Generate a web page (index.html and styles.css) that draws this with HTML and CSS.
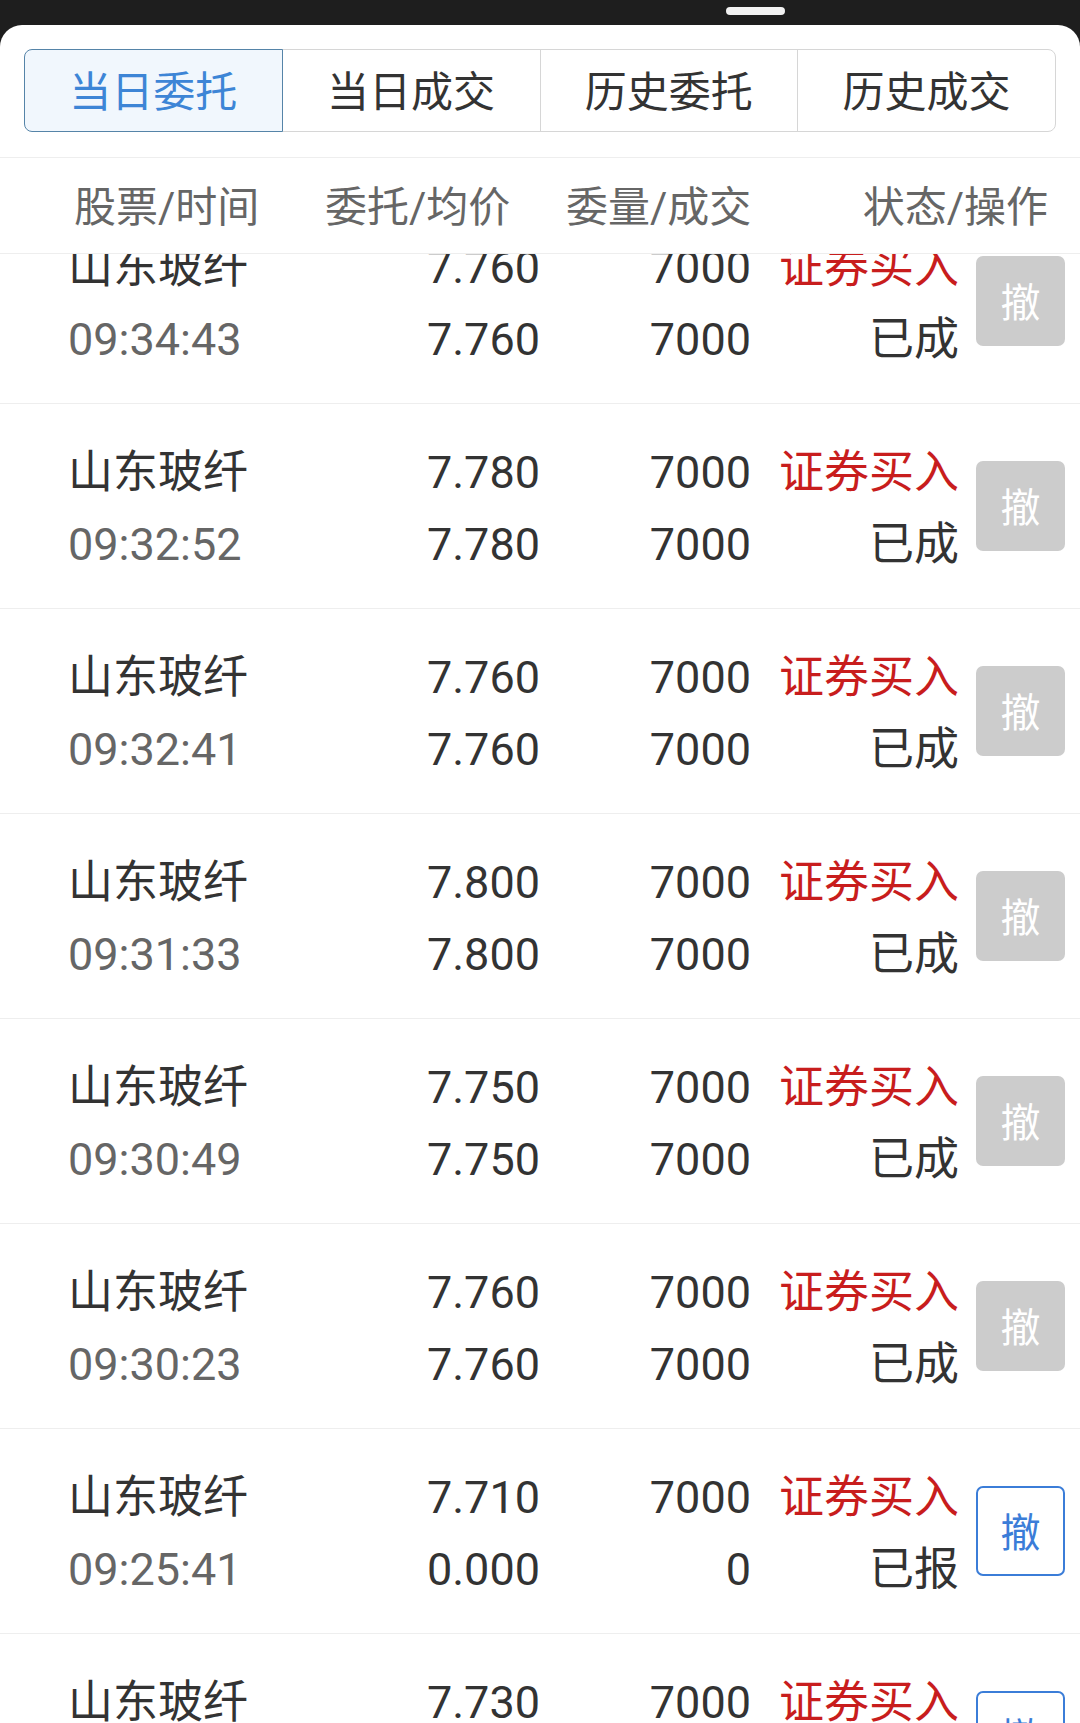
FILE: index.html
```html
<!DOCTYPE html>
<html lang="zh-CN">
<head>
    <meta charset="UTF-8">
    <meta name="viewport" content="width=device-width, initial-scale=1.0">
    <title>当日委托</title>
    <link rel="stylesheet" href="styles.css">
</head>
<body>
    <div class="top-bar">
        <div class="handle"></div>
    </div>

    <div class="sheet">
        <div class="tabs">
            <div class="tab active">当日委托</div>
            <div class="tab">当日成交</div>
            <div class="tab">历史委托</div>
            <div class="tab">历史成交</div>
        </div>

        <div class="list-header">
            <span>股票/时间</span>
            <span>委托/均价</span>
            <span>委量/成交</span>
            <span>状态/操作</span>
        </div>

        <div class="list-view">
            <div class="list">
                <div class="row">
                    <div class="cell name"><div>山东玻纤</div><div class="time">09:34:43</div></div>
                    <div class="cell num"><div>7.760</div><div>7.760</div></div>
                    <div class="cell num"><div>7000</div><div>7000</div></div>
                    <div class="cell num"><div class="buy">证券买入</div><div>已成</div></div>
                    <button class="cancel-btn">撤</button>
                </div>
                <div class="row">
                    <div class="cell name"><div>山东玻纤</div><div class="time">09:32:52</div></div>
                    <div class="cell num"><div>7.780</div><div>7.780</div></div>
                    <div class="cell num"><div>7000</div><div>7000</div></div>
                    <div class="cell num"><div class="buy">证券买入</div><div>已成</div></div>
                    <button class="cancel-btn">撤</button>
                </div>
                <div class="row">
                    <div class="cell name"><div>山东玻纤</div><div class="time">09:32:41</div></div>
                    <div class="cell num"><div>7.760</div><div>7.760</div></div>
                    <div class="cell num"><div>7000</div><div>7000</div></div>
                    <div class="cell num"><div class="buy">证券买入</div><div>已成</div></div>
                    <button class="cancel-btn">撤</button>
                </div>
                <div class="row">
                    <div class="cell name"><div>山东玻纤</div><div class="time">09:31:33</div></div>
                    <div class="cell num"><div>7.800</div><div>7.800</div></div>
                    <div class="cell num"><div>7000</div><div>7000</div></div>
                    <div class="cell num"><div class="buy">证券买入</div><div>已成</div></div>
                    <button class="cancel-btn">撤</button>
                </div>
                <div class="row">
                    <div class="cell name"><div>山东玻纤</div><div class="time">09:30:49</div></div>
                    <div class="cell num"><div>7.750</div><div>7.750</div></div>
                    <div class="cell num"><div>7000</div><div>7000</div></div>
                    <div class="cell num"><div class="buy">证券买入</div><div>已成</div></div>
                    <button class="cancel-btn">撤</button>
                </div>
                <div class="row">
                    <div class="cell name"><div>山东玻纤</div><div class="time">09:30:23</div></div>
                    <div class="cell num"><div>7.760</div><div>7.760</div></div>
                    <div class="cell num"><div>7000</div><div>7000</div></div>
                    <div class="cell num"><div class="buy">证券买入</div><div>已成</div></div>
                    <button class="cancel-btn">撤</button>
                </div>
                <div class="row">
                    <div class="cell name"><div>山东玻纤</div><div class="time">09:25:41</div></div>
                    <div class="cell num"><div>7.710</div><div>0.000</div></div>
                    <div class="cell num"><div>7000</div><div>0</div></div>
                    <div class="cell num"><div class="buy">证券买入</div><div>已报</div></div>
                    <button class="cancel-btn open">撤</button>
                </div>
                <div class="row">
                    <div class="cell name"><div>山东玻纤</div><div class="time">09:25:12</div></div>
                    <div class="cell num"><div>7.730</div><div>0.000</div></div>
                    <div class="cell num"><div>7000</div><div>0</div></div>
                    <div class="cell num"><div class="buy">证券买入</div><div>已报</div></div>
                    <button class="cancel-btn open">撤</button>
                </div>
            </div>
        </div>
    </div>
</body>
</html>
```

FILE: styles.css
```css
* {
    box-sizing: border-box;
}

body {
    margin: 0;
    background-color: #1e1e1e;
    font-family: Roboto, "Noto Sans CJK SC", sans-serif;
    color: #333;
}

.top-bar {
    height: 25px;
    padding-top: 7px;
    padding-left: 726px;
}

.handle {
    width: 59px;
    height: 8px;
    border-radius: 4px;
    background: #f2f2f2;
}

.sheet {
    height: calc(100vh - 25px);
    background: #fff;
    border-radius: 22px 22px 0 0;
    padding-top: 24px;
    display: flex;
    flex-direction: column;
}

.tabs {
    display: flex;
    height: 83px;
    margin: 0 24px;
}

.tab {
    flex: 1;
    display: flex;
    align-items: center;
    justify-content: center;
    padding-bottom: 4px;
    font-size: 42px;
    color: #333;
    border: 1px solid #d6d6d6;
    margin-left: -1px;
}

.tab:first-child {
    margin-left: 0;
    border-radius: 8px 0 0 8px;
}

.tab:last-child {
    border-radius: 0 8px 8px 0;
}

.tab.active {
    position: relative;
    color: #3d85d6;
    background: #f1f7fd;
    border-color: #5584a8;
}

.list-header {
    display: grid;
    grid-template-columns: 251px 241px 1fr auto;
    align-items: center;
    height: 97px;
    margin-top: 25px;
    padding: 0 32px 5px 74px;
    border-top: 1px solid #eee;
    border-bottom: 1px solid #eee;
    font-size: 42px;
    color: #666;
}

.list-view {
    flex: 1;
    min-height: 0;
    overflow: hidden;
}

/* scrolled a little: the first row sits partly under the header */
.list {
    margin-top: -55px;
}

.row {
    display: grid;
    grid-template-columns: 200px 272px 211px 208px 1fr;
    align-items: center;
    height: 205px;
    padding: 0 15px 0 68px;
    border-bottom: 1px solid #eee;
    font-size: 45px;
}

.cell {
    padding-top: 6px;
    line-height: 72px;
    white-space: nowrap;
}

.num {
    text-align: right;
}

.time {
    color: #666;
}

.buy {
    color: #c81d1d;
}

.cancel-btn {
    justify-self: end;
    width: 89px;
    height: 90px;
    border: none;
    border-radius: 7px;
    background: #cccccc;
    color: #fff;
    font-family: inherit;
    font-size: 40px;
    padding: 0 0 3px;
}

.cancel-btn.open {
    background: #fff;
    border: 2px solid #3b7dd8;
    color: #3b7dd8;
}
```
